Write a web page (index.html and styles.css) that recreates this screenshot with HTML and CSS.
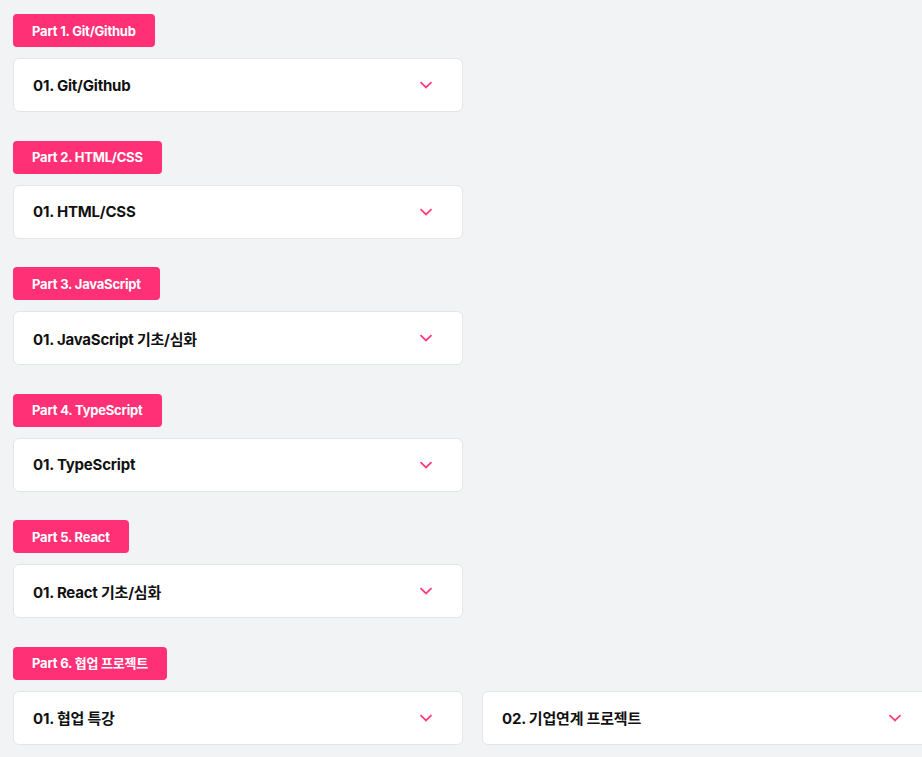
FILE: index.html
```html
<!DOCTYPE html>
<html lang="ko">

<head>
    <meta charset="UTF-8">
    <meta name="viewport" content="width=device-width, initial-scale=1.0">
    <title>Curriculum</title>
    <link rel="stylesheet" href="styles.css">
</head>

<body>
    <div class="curriculum">
        <section class="part">
            <span class="part-label">Part 1. Git/Github</span>
            <div class="lessons">
                <div class="lesson">
                    <span class="lesson-title">01. Git/Github</span>
                    <svg class="chevron" viewBox="0 0 14 8"><path d="M1.5 1.2 L7 6.5 L12.5 1.2"/></svg>
                </div>
            </div>
        </section>

        <section class="part">
            <span class="part-label">Part 2. HTML/CSS</span>
            <div class="lessons">
                <div class="lesson">
                    <span class="lesson-title">01. HTML/CSS</span>
                    <svg class="chevron" viewBox="0 0 14 8"><path d="M1.5 1.2 L7 6.5 L12.5 1.2"/></svg>
                </div>
            </div>
        </section>

        <section class="part">
            <span class="part-label">Part 3. JavaScript</span>
            <div class="lessons">
                <div class="lesson">
                    <span class="lesson-title">01. JavaScript 기초/심화</span>
                    <svg class="chevron" viewBox="0 0 14 8"><path d="M1.5 1.2 L7 6.5 L12.5 1.2"/></svg>
                </div>
            </div>
        </section>

        <section class="part">
            <span class="part-label">Part 4. TypeScript</span>
            <div class="lessons">
                <div class="lesson">
                    <span class="lesson-title">01. TypeScript</span>
                    <svg class="chevron" viewBox="0 0 14 8"><path d="M1.5 1.2 L7 6.5 L12.5 1.2"/></svg>
                </div>
            </div>
        </section>

        <section class="part">
            <span class="part-label">Part 5. React</span>
            <div class="lessons">
                <div class="lesson">
                    <span class="lesson-title">01. React 기초/심화</span>
                    <svg class="chevron" viewBox="0 0 14 8"><path d="M1.5 1.2 L7 6.5 L12.5 1.2"/></svg>
                </div>
            </div>
        </section>

        <section class="part">
            <span class="part-label">Part 6. 협업 프로젝트</span>
            <div class="lessons">
                <div class="lesson">
                    <span class="lesson-title">01. 협업 특강</span>
                    <svg class="chevron" viewBox="0 0 14 8"><path d="M1.5 1.2 L7 6.5 L12.5 1.2"/></svg>
                </div>
                <div class="lesson">
                    <span class="lesson-title">02. 기업연계 프로젝트</span>
                    <svg class="chevron" viewBox="0 0 14 8"><path d="M1.5 1.2 L7 6.5 L12.5 1.2"/></svg>
                </div>
            </div>
        </section>
    </div>
</body>

</html>
```

FILE: styles.css
```css
body {
    margin: 0;
    background-color: #f2f3f5;
    font-family: Inter, "Noto Sans CJK KR", sans-serif;
    color: #111;
    overflow: hidden;
}

.curriculum {
    padding: 14px 0 0 13px;
    display: flex;
    flex-direction: column;
    gap: 28.6px;
}

.part {
    display: flex;
    flex-direction: column;
    align-items: flex-start;
    gap: 11px;
}

.part-label {
    display: block;
    background-color: #ff3076;
    color: white;
    font-size: 13px;
    font-weight: 700;
    line-height: 16px;
    padding: 8.5px 19px;
    border-radius: 4px;
    letter-spacing: -0.2px;
}

.lessons {
    display: grid;
    grid-template-columns: repeat(2, 450px);
    gap: 19px;
}

.lesson {
    box-sizing: border-box;
    height: 54px;
    background: white;
    border: 1px solid #e3e5e8;
    border-radius: 6px;
    padding: 0 29px 0 19px;
    display: flex;
    align-items: center;
    justify-content: space-between;
}

.lesson-title {
    font-size: 15px;
    font-weight: 700;
    letter-spacing: -0.2px;
}

.chevron {
    width: 14px;
    height: 8px;
    fill: none;
    stroke: #ff3b7f;
    stroke-width: 1.8;
}
```
